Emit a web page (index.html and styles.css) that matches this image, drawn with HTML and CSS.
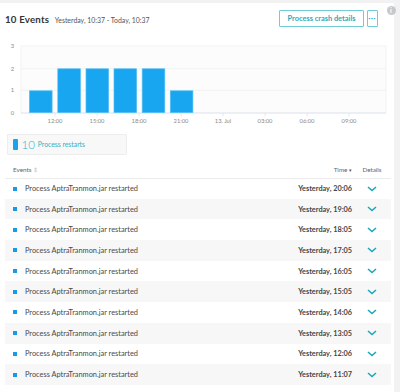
FILE: index.html
```html
<!DOCTYPE html>
<html lang="en">
  <head>
    <meta charset="UTF-8" />
    <title>10 Events</title>
    <link rel="stylesheet" href="styles.css">
  </head>
  <body>
    <div class="card">
      <span class="info-icon">i</span>

      <div class="top">
        <h1 class="title">10 Events <span class="range">Yesterday, 10:37 - Today, 10:37</span></h1>
        <div class="actions">
          <button class="btn">Process crash details</button>
          <button class="btn btn-more">···</button>
        </div>
      </div>

      <svg class="chart" width="394" height="96" viewBox="0 36 394 96">
        <rect x="21" y="46" width="365" height="67" fill="#fcfcfc" stroke="#f1f1f1" stroke-width="0.8" />
        <line x1="21" y1="68.7" x2="386" y2="68.7" stroke="#efefef" stroke-width="0.8" />
        <line x1="21" y1="90.3" x2="386" y2="90.3" stroke="#efefef" stroke-width="0.8" />
        <line x1="21" y1="113" x2="386" y2="113" stroke="#dfe6f0" stroke-width="1" />

        <g class="ylabels">
          <text x="12.5" y="48">3</text>
          <text x="12.5" y="70.7">2</text>
          <text x="12.5" y="92.3">1</text>
          <text x="12.5" y="115">0</text>
        </g>

        <g fill="#17a6ef" stroke="#52bdf4" stroke-width="0.7">
          <rect x="29.5" y="90.8" width="22.6" height="21.8" />
          <rect x="57.8" y="68.8" width="22.6" height="43.8" />
          <rect x="86" y="68.8" width="22.6" height="43.8" />
          <rect x="114" y="68.8" width="22.6" height="43.8" />
          <rect x="142.2" y="68.8" width="22.6" height="43.8" />
          <rect x="170.3" y="90.8" width="22.6" height="21.8" />
        </g>

        <g stroke="#dbe3ed" stroke-width="0.8">
          <line x1="55" y1="113" x2="55" y2="116.5" />
          <line x1="97" y1="113" x2="97" y2="116.5" />
          <line x1="139" y1="113" x2="139" y2="116.5" />
          <line x1="181" y1="113" x2="181" y2="116.5" />
          <line x1="223" y1="113" x2="223" y2="116.5" />
          <line x1="265" y1="113" x2="265" y2="116.5" />
          <line x1="307" y1="113" x2="307" y2="116.5" />
          <line x1="349" y1="113" x2="349" y2="116.5" />
        </g>

        <g class="xlabels">
          <text x="55" y="122.5">12:00</text>
          <text x="97" y="122.5">15:00</text>
          <text x="139" y="122.5">18:00</text>
          <text x="181" y="122.5">21:00</text>
          <text x="223" y="122.5">13. Jul</text>
          <text x="265" y="122.5">03:00</text>
          <text x="307" y="122.5">06:00</text>
          <text x="349" y="122.5">09:00</text>
        </g>
      </svg>

      <div class="summary">
        <span class="summary-mark"></span>
        <span class="summary-count">10</span>
        <span class="summary-label">Process restarts</span>
      </div>

      <table class="events">
        <thead>
          <tr>
            <th class="col-event">Events <span class="sort">⇕</span></th>
            <th class="col-time">Time <span class="sort-down">▾</span></th>
            <th class="col-details">Details</th>
          </tr>
        </thead>
        <tbody id="rows"></tbody>
      </table>
    </div>

    <script>
      const times = [
        "Yesterday, 20:06",
        "Yesterday, 19:06",
        "Yesterday, 18:05",
        "Yesterday, 17:05",
        "Yesterday, 16:05",
        "Yesterday, 15:05",
        "Yesterday, 14:06",
        "Yesterday, 13:05",
        "Yesterday, 12:06",
        "Yesterday, 11:07"
      ];

      const rows = document.getElementById("rows");

      times.forEach(time => {
        const tr = document.createElement("tr");
        tr.innerHTML =
          '<td class="col-event"><span class="event-mark"></span>Process AptraTranmon.jar restarted</td>' +
          '<td class="col-time">' + time + '</td>' +
          '<td class="col-details"><svg class="chevron" width="10" height="6" viewBox="0 0 10 6"><polyline points="1,1 5,4.6 9,1" /></svg></td>';
        rows.appendChild(tr);
      });
    </script>
  </body>
</html>
```

FILE: styles.css
```css
* {
  box-sizing: border-box;
}

html,
body {
  margin: 0;
  padding: 0;
  background: #f2f2f2;
  font-family: "Lato", "Open Sans", sans-serif;
  overflow: hidden;
}

.card {
  position: relative;
  width: 394px;
  height: 389px;
  margin-top: 3px;
  background: #fff;
}

.info-icon {
  position: absolute;
  top: 3px;
  left: 386.5px;
  width: 9px;
  height: 9px;
  border-radius: 50%;
  background: #c8c8c8;
  color: #fff;
  font-size: 7px;
  font-weight: 700;
  line-height: 9px;
  text-align: center;
}

.top {
  display: flex;
  justify-content: space-between;
  align-items: flex-start;
  height: 33px;
  padding: 7px 16.5px 0 5px;
}

.title {
  margin: 3px 0 0;
  font-size: 9.7px;
  font-weight: 700;
  color: #353535;
  letter-spacing: 0.2px;
}

.range {
  margin-left: 3px;
  font-size: 6.9px;
  font-weight: 400;
  color: #555;
  letter-spacing: 0;
}

.actions {
  display: flex;
  gap: 2.5px;
}

.btn {
  height: 17px;
  padding: 0 7.5px;
  border: 1px solid #72ccd6;
  border-radius: 1px;
  background: #fff;
  color: #2fa9b9;
  font-family: inherit;
  font-size: 7.4px;
  font-weight: 700;
  cursor: pointer;
}

.btn-more {
  width: 11px;
  padding: 0;
  font-size: 7px;
  letter-spacing: 0.6px;
  text-indent: 0.6px;
  line-height: 1;
  overflow: hidden;
}

.chart {
  display: block;
}

.ylabels text {
  font-size: 5.8px;
  fill: #8a8a8a;
  text-anchor: middle;
}

.xlabels text {
  font-size: 5.8px;
  fill: #8a8a8a;
  text-anchor: middle;
}

.summary {
  display: flex;
  align-items: center;
  width: 120px;
  height: 20.5px;
  margin: 2px 0 0 7px;
  padding-left: 4.5px;
  background: #f8f8f8;
  border: 1px solid #ededed;
  border-radius: 1px;
}

.summary-mark {
  width: 5px;
  height: 11.5px;
  border-radius: 1px;
  background: #1aa3ec;
}

.summary-count {
  margin-left: 4px;
  font-size: 11.5px;
  font-weight: 300;
  color: #2db4c6;
}

.summary-label {
  margin-left: 3px;
  font-size: 6.8px;
  color: #2db4c6;
}

.events {
  width: 386px;
  margin: 0 0 0 5px;
  border-collapse: collapse;
  font-size: 7.4px;
}

.events th {
  height: 23.5px;
  padding: 0 0 5px;
  vertical-align: bottom;
  font-size: 6.3px;
  font-weight: 400;
  color: #666;
  border-bottom: 1px solid #ececec;
}

.events th.col-event {
  padding-left: 8px;
  text-align: left;
}

.sort {
  color: #bbb;
  font-size: 5.5px;
}

.sort-down {
  font-size: 5px;
  color: #555;
}

.events th.col-time {
  padding-right: 1px;
  text-align: right;
}

.events td {
  height: 20.7px;
  padding: 0;
  color: #4a4a4a;
}

.events tbody tr:nth-child(even) {
  background: #f7f7f7;
}

.events td.col-event {
  padding-left: 8px;
}

.event-mark {
  display: inline-block;
  width: 4px;
  height: 4px;
  margin-right: 8px;
  vertical-align: 0.5px;
  background: #1a9ae6;
}

.events td.col-time {
  padding-right: 1px;
  text-align: right;
  font-weight: 700;
  color: #474747;
  font-size: 7.3px;
}

.col-details {
  width: 38px;
  text-align: center;
}

.chevron {
  display: block;
  margin: 0 auto;
  fill: none;
  stroke: #1ba6ba;
  stroke-width: 1.5;
}
```
